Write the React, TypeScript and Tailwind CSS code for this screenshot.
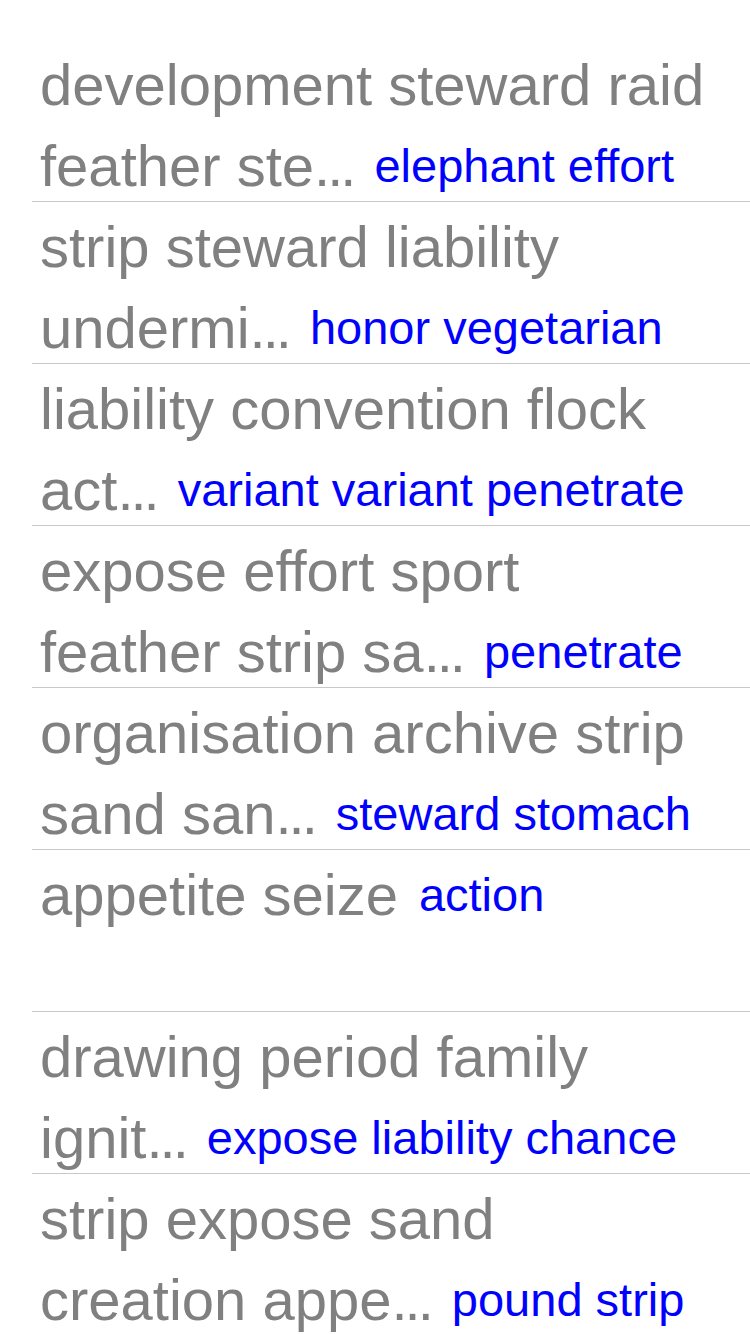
import React from "react";

type Row = { l1: string; l2?: string; tag: string };

const rows: Row[] = [
  { l1: "development steward raid", l2: "feather ste", tag: "elephant effort" },
  { l1: "strip steward liability", l2: "undermi", tag: "honor vegetarian" },
  { l1: "liability convention flock", l2: "act", tag: "variant variant penetrate" },
  { l1: "expose effort sport", l2: "feather strip sa", tag: "penetrate" },
  { l1: "organisation archive strip", l2: "sand san", tag: "steward stomach" },
  { l1: "appetite seize", tag: "action" },
  { l1: "drawing period family", l2: "ignit", tag: "expose liability chance" },
  { l1: "strip expose sand", l2: "creation appe", tag: "pound strip" },
];

function Tag({ text }: { text: string }) {
  return (
    <span className="ml-[21px] text-[47px] text-[#0000ff] align-[4px]">{text}</span>
  );
}

export default function App() {
  return (
    <div
      className="w-[750px] h-[1334px] overflow-hidden bg-white pt-[40px]"
      style={{ fontFamily: '"Liberation Sans", Arial, sans-serif' }}
    >
      {rows.map((r, i) => (
        <div key={i} className="h-[162px] pl-[32px]">
          <div className="h-[161px] pl-[8px] pt-[4px] text-[58px] leading-[81px] text-[#808080] whitespace-nowrap">
            {r.l2 ? (
              <>
                <div>{r.l1}</div>
                <div>
                  {r.l2}
                  <span className="tracking-[-3px]">...</span>
                  <Tag text={r.tag} />
                </div>
              </>
            ) : (
              <div>
                {r.l1}
                <Tag text={r.tag} />
              </div>
            )}
          </div>
          <div className="h-px bg-[#c8c7cc]" />
        </div>
      ))}
    </div>
  );
}
